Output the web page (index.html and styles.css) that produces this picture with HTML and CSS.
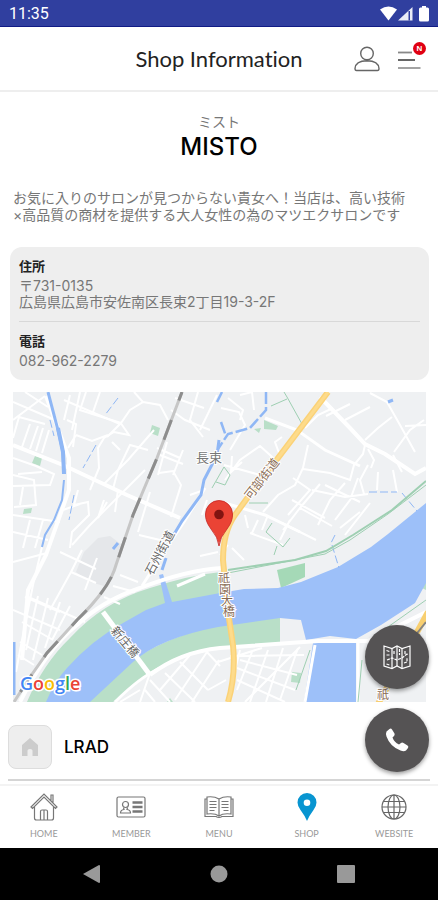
FILE: index.html
```html
<!DOCTYPE html>
<html lang="ja">
<head>
  <meta charset="UTF-8">
  <meta name="viewport" content="width=device-width, initial-scale=1.0">
  <title>Shop Information</title>
  <link rel="stylesheet" href="styles.css">
</head>
<body>
<div class="status-bar">
  <span class="clock">11:35</span>
  <svg class="status-icons" width="50" height="16" viewBox="0 0 50 16" fill="#fff">
    <path d="M0 3.600Q8.500-2.600 17 3.600L8.500 14.500z"/>
    <path d="M32.500 1v13.500H18z" opacity=".9"/>
    <path d="M28.500 5v9.500h1.500V5z" fill="#303f9f"/>
    <path d="M42 1.500v-1.500h4v1.500h1.500q1.500 0 1.500 1.500v11q0 1.500-1.500 1.500h-7q-1.500 0-1.500-1.500v-11q0-1.500 1.500-1.500z"/>
  </svg>
</div>

<header class="header">
  <h1>Shop Information</h1>
  <div class="header-actions">
    <button type="button" class="icon-btn" aria-label="Account">
      <svg width="26" height="26" viewBox="0 0 26 26" fill="none" stroke="#666" stroke-width="1.400">
        <circle cx="13" cy="7.500" r="6.300"/>
        <path d="M1 22.500Q1.500 15 13 14.800Q24.500 15 25 22.500q0 2-1.500 2h-21q-1.500 0-1.500-2z"/>
      </svg>
    </button>
    <button type="button" class="icon-btn menu-btn" aria-label="Menu">
      <svg width="23" height="26" viewBox="0 0 23 26" fill="none" stroke-width="1.800">
        <path d="M0 6.500h14" stroke="#888"/>
        <path d="M0 14h17" stroke="#555"/>
        <path d="M0 22h22.500" stroke="#999"/>
      </svg>
      <span class="badge">N</span>
    </button>
  </div>
</header>

<main>
  <section class="shop-title">
    <p>ミスト</p>
    <h2>MISTO</h2>
  </section>

  <p class="lead">お気に入りのサロンが見つからない貴女へ！当店は、高い技術<br>×高品質の商材を提供する大人女性の為のマツエクサロンです</p>

  <dl class="info-card">
    <div class="info-row">
      <dt>住所</dt>
      <dd>〒731-0135<br>広島県広島市安佐南区長束2丁目19-3-2F</dd>
    </div>
    <div class="info-row">
      <dt>電話</dt>
      <dd>082-962-2279</dd>
    </div>
  </dl>

  <div class="map">
    <svg viewBox="13 392 413 310" role="img" aria-label="地図">
      <rect x="13" y="392" width="413" height="310" fill="#eff1f3"/>
      <path d="M110 536L122 545 116 565 104 586 90 582 76 572 84 552 98 538z" fill="#e5e7ea"/>

      <!-- parks and river banks -->
      <g fill="#b9dfc8">
        <path d="M27 702Q43 664 70 638Q103 602 150 588Q190 575 221 572V600L165 612 100 650 50 702z"/>
        <path d="M88 702Q110 674 133 660Q170 635 218 626L280 616V643L220 647Q180 652 150 673L113 702z"/>
        <path d="M277 570L305 563V577L281 588z" fill="#a5d9b7"/>
        <path d="M152 425l8 3-2 8-8-3z"/>
        <path d="M35 456l7 2-2 8-8-3z"/>
        <path d="M24 509l8-1-1 5-8 1z"/>
        <path d="M264 420l14 6-2 4-12-1zM254 429l7-1-2 5z"/>
        <path d="M292 672l9 1-1 10-9-1z"/>
        <path d="M426 580v10l-4-2z"/>
        <path d="M170 698l3 4h-6z"/>
      </g>

      <!-- river -->
      <g fill="#9dc0f9">
        <path d="M46 702Q54 682 67 668Q92 640 123 623L146 610 165 603 159 575l4-1 9 28 48-9 24-4 34-1 23-6 37-15 33-20 17-13 38-31V583l-11 20-34 22-25 14-26-3-24 4-5-20-21-2-62 9Q160 638 133 662L90 702z"/>
        <path d="M313 643H356V702H304z"/>
      </g>

      <!-- small streets -->
      <g fill="none" stroke="#fff" stroke-width="2">
        <path d="M13 402L34 411 55 420M13 420L45 396M25 392L48 407M70 395L64 420M80 392L72 430M64 400L120 424 107 437"/>
        <path d="M13 438L19 417 45 424M22 447L30 424M30 449L38 426M36 451L43 428M42 453L49 430M67 420L76 424 73 447M76 435L92 441 108 435M76 435L68 448"/>
        <path d="M86 392L80 410 121 423 130 410 143 402 134 392M100 392L92 415M143 402L160 405 168 420M120 422L129 435 114 432 104 438 98 448 99 468 90 490M112 442L120 450M148 450L130 445 118 470 113 489M104 484L128 460 154 430"/>
        <path d="M13 458L36 466 54 474 50 485 13 486M18 474L42 472M13 475L34 480 36 505 14 507M13 515L60 522M23 487L20 505M13 532L48 540M30 520L23 548M43 520L35 548M78 490L74 505 88 502 89 515 72 532 70 548M63 510L80 504M104 500L98 518 107 502M118 490L115 512"/>
        <path d="M157 448L180 458M160 455L183 464M167 442L158 475M159 473L173 471 181 485 171 517M150 492L138 532M183 450L173 475M139 535L160 540M171 410L185 420 210 430M175 398L204 408M198 392L190 420 203 437M217 395L200 430M228 398L243 410 240 420M190 495L204 490M207 500L202 515"/>
        <path d="M42 547L33 585 22 640 16 672M13 562L47 553M25 597L60 612M60 552L96 569M82 550L71 572 50 610M71 572L96 583M97 558L85 590M13 610L60 630M26 596L85 622M22 622L53 640M20 642L42 655M18 655L34 665M60 602L45 648M48 598L33 660M38 596L26 650M70 606L52 640M113 586L135 592M120 575L138 582M104 597L120 604"/>
        <path d="M240 395L252 392 254 410M221 408L239 412 245 425 230 450M224 465L260 475M232 456L231 472 242 462M225 480L240 460 260 446 270 455 278 463M282 437L275 442 279 453M305 428L318 415 333 408M308 445L303 468 295 485 278 495 263 512M303 469L330 473 350 480 354 465 363 454 365 445M368 449L374 460 371 468M293 478L310 490 288 515M320 484L300 508 283 530M312 490L345 497 368 494M325 485L360 502M300 508L332 526M292 500L325 518M345 483L330 500 318 525M358 478L350 500 335 520M393 470L397 492M378 472L377 490M364 494L360 480 368 465M393 455L402 472M360 512L340 528M370 503L345 535M282 523L316 540M245 515L248 528M258 520L252 533M268 515L262 530M250 533L283 545M290 520L280 540"/>
        <path d="M350 404L326 416M370 407L345 420M365 440L378 428 392 417M370 393L387 402 400 425 415 452M424 420L410 430 394 452M426 425L405 426M220 555L228 545M232 548L244 560M200 556L218 552"/>
        <path d="M230 656L304 655M218 662L262 648M240 650L235 670M252 652L237 690M268 650L250 702M283 648L266 702M298 648L280 700M237 668L295 690M237 680L285 702M240 660L297 675M150 680L170 702M165 673L195 702M180 662L208 690M205 650L220 666M190 655L160 690M207 652L175 700M219 660L192 702M150 673L140 702M208 690L226 680M145 690L155 702M120 702L140 690"/>
      </g>

      <!-- wide roads -->
      <g fill="none" stroke="#fff" stroke-width="4">
        <path d="M13 445L63 465 127 495 180 518"/>
        <path d="M46 396L69 458 69 490 46 555 28 590 22 660"/>
        <path d="M20 702Q46 650 77 625Q102 601 140 588Q187 570 222 568"/>
        <path d="M103 612L150 675" stroke-width="5"/>
        <path d="M150 675Q180 652 220 648L318 641 368 641 426 612"/>
        <path d="M320 397L350 428 365 444 385 454 415 474 426 468"/>
        <path d="M265 418L297 430 325 450 360 466" stroke-width="3"/>
        <path d="M218 501L265 515 300 532" stroke-width="3"/>
        <path d="M115 702Q140 677 160 668" stroke-width="3"/>
        <path d="M205 488L184 522 165 550 142 586" stroke-width="3"/>
        <path d="M145 470L90 525 72 545" stroke-width="2"/>
        <path d="M358 642V702M305 702L315 645" stroke-width="3"/>
        <path d="M177 586L205 574" stroke-width="3"/>
        <path d="M245 702L300 647" stroke-width="2"/>
      </g>

      <!-- canals -->
      <g fill="none" stroke="#8fb7f5">
        <path d="M48 392L58 430 63 452 64 474" stroke-width="3"/>
        <path d="M58 428L63 452 64 474" stroke-width="4"/>
        <path d="M64 480L62 500 54 520 45 535 42 547" stroke-width="2"/>
        <path d="M219 440L217 455 204 480 201 495 182 521 173 536" stroke-width="3"/>
        <path d="M266 392L266 410 250 428 228 434 218 449M221 422L226 436M222 392L217 402" stroke-width="2.500" stroke-dasharray="12 3"/>
        <path d="M14 642V695M118 543L113 549M388 402L393 400" stroke-width="3"/>
        <path d="M162 570L166 558" stroke-width="3"/>
        <path d="M118 398L105 415M96 445L83 468M74 495L69 520M50 420L54 436M369 492L397 492M402 493L417 511M332 545L339 568M335 535L330 545" stroke-width="1" stroke-dasharray="8 3"/>
      </g>

      <!-- footpaths -->
      <g fill="none" stroke="#9ecfb2">
        <path d="M426 481L392 510 353 535 326 551 295 560 228 570" stroke-width="2"/>
        <path d="M426 485L388 514 350 540 325 554 228 573M284 392L287 397 302 424M271 406L287 399M249 503L268 503M272 523L266 532 283 547 290 538M277 546L274 555M358 702L362 660M296 690L310 650M378 634L426 600M212 488L224 467 230 475 225 485 216 482" stroke-width="1"/>
      </g>

      <!-- railway -->
      <path d="M182 392L157 458 133 515 116 565Q110 588 77 620L47 653 28 680 14 702" fill="none" stroke="#c6c6c6" stroke-width="3"/>
      <path d="M182 392L157 458 133 515 116 565Q110 588 77 620L47 653 28 680 14 702" fill="none" stroke="#8d8d8d" stroke-width="3" stroke-dasharray="21 21" stroke-dashoffset="12"/>

      <!-- main road -->
      <path d="M328 392L278 458 248 497 235 515Q223 532 223 560L228 612 233 645Q236 675 228 702" fill="none" stroke="#fbd277" stroke-width="6"/>
      <path d="M328 392L278 458 248 497 235 515Q223 532 223 560L228 612 233 645Q236 675 228 702" fill="none" stroke="#fddb8b" stroke-width="3"/>
      <path d="M428 612L378 704" fill="none" stroke="#f8cf70" stroke-width="6"/>
      <path d="M426 622L410 642" fill="none" stroke="#858585" stroke-width="2"/>

      <g class="map-labels">
        <text x="196" y="462" class="area">長束</text>
        <text transform="translate(262 479) rotate(-52)" class="road" y="4">可部街道</text>
        <text transform="translate(160 553) rotate(-62)" y="4">石州街道</text>
        <text transform="translate(125 642) rotate(50)" y="4">新庄橋</text>
        <text class="road" x="224 225 227 229" y="583 594 605 616">祇園大橋</text>
        <text class="road" x="383" y="699">祇</text>
      </g>

      <text class="google" x="20" y="690"><tspan fill="#4285f4">G</tspan><tspan fill="#ea4335">o</tspan><tspan fill="#fbbc05">o</tspan><tspan fill="#4285f4">g</tspan><tspan fill="#34a853">l</tspan><tspan fill="#ea4335">e</tspan></text>

      <path d="M219 546Q218 537 211 529Q205 521 205.500 514A13.500 13.500 0 0 1 232.500 514Q233 521 227 529Q220 537 219 546z" fill="#ea4335" stroke="#c5221f" stroke-width=".8"/>
      <circle cx="219" cy="514.500" r="4.800" fill="#811411"/>
    </svg>
  </div>

  <a href="#" class="shop-link">
    <span class="shop-thumb">
      <svg width="16" height="18" viewBox="0 0 16 18" fill="#ccc"><path d="M8 0l8 7v11h-5.500v-5.500q0-1.500-2.500-1.500t-2.500 1.500V18H0V7z"/></svg>
    </span>
    <span>LRAD</span>
  </a>
</main>

<div class="fabs">
  <button type="button" class="fab" aria-label="地図を開く">
    <svg width="28" height="26" viewBox="0 0 28 26" fill="none" stroke="#fff" stroke-width="1.200">
      <path d="M1 2L9 4.500 14 2l5 2.500 8-2.500v20l-8 2.500-5-2.500-5 2.500-8-2.500z"/>
      <path d="M9 4.500v20M14 2v20M19 4.500v20"/>
      <path d="M3.500 6.500l3 1M3.500 11h3.500M3.500 20l3 1M4 16l5-2 5 2 5-2 5-4M16.500 5v6M22 7v4l3-1M21 19l3-1v-4M11 7v4" stroke-dasharray="3 1"/>
    </svg>
  </button>
  <button type="button" class="fab" aria-label="電話をかける">
    <svg width="24" height="24" viewBox="0 0 24 24" fill="#fff"><path d="M1.500 3.500L4.500 1Q6 0 7 1.500L9.500 5.500Q10 7 9 8L7.500 9.500Q9 14 14 16.500L16 15Q17 14.200 18.500 15L22.500 17.500Q24 18.500 23 20L21 22.500Q19 24 15.500 22.500Q5 18.500 1.500 8.500Q.5 5.500 1.500 3.500z"/></svg>
  </button>
</div>

<nav class="tabs">
  <a href="#">
    <svg width="28" height="28" viewBox="0 0 28 28" fill="none" stroke="#777" stroke-width="1.200">
      <path d="M1 14L14 1l13 13-1.500 1.500L14 4 2.500 15.500zM4.500 14v11q0 2 2 2h15q2 0 2-2V14M21 7.500V2h2v7.500M10.500 27V18.500q0-1.500 1.500-1.500h4q1.500 0 1.500 1.500V27M14 17v10"/>
    </svg>
    <span>HOME</span>
  </a>
  <a href="#">
    <svg width="30" height="28" viewBox="0 0 30 28" fill="none" stroke="#777" stroke-width="1.200">
      <rect x="1" y="4" width="28" height="20" rx="1.500"/>
      <circle cx="9.500" cy="11.500" r="3"/>
      <path d="M7.500 14.500l.5 2Q4.500 17 4.500 20h10q0-3-3.500-3.500l.5-2"/>
      <path d="M16.500 9.500h10M16.500 14h10M16.500 18.500h10" stroke-width="2.500"/>
    </svg>
    <span>MEMBER</span>
  </a>
  <a href="#">
    <svg width="30" height="28" viewBox="0 0 30 28" fill="none" stroke="#777" stroke-width="1.200">
      <path d="M15 6Q10 3 3 4v17q8-1 12 2 4-3 12-2V4Q20 3 15 6zM15 6v17M3 6H1v17.500h11q3 2 6 0h11V6h-2"/>
      <path d="M5.500 8.500h7M5.500 11.500h7M5.500 14.500h7M5.500 17.500h5M17.500 8.500h7M17.500 11.500h7M17.500 14.500h7M19.500 17.500h5"/>
    </svg>
    <span>MENU</span>
  </a>
  <a href="#" class="active">
    <svg width="20" height="28" viewBox="0 0 20 28" fill="#0895d1"><path fill-rule="evenodd" d="M10 28Q8 23 3.500 17Q.5 13 .5 9.500a9.500 9.500 0 0 1 19 0Q19.500 13 16.500 17Q12 23 10 28zM10 6.500a3.300 3.300 0 1 0 0 6.600a3.300 3.300 0 1 0 0-6.600z"/></svg>
    <span>SHOP</span>
  </a>
  <a href="#">
    <svg width="26" height="28" viewBox="0 0 26 28" fill="none" stroke="#666" stroke-width="1.200">
      <circle cx="13" cy="14" r="12"/>
      <ellipse cx="13" cy="14" rx="6" ry="12"/>
      <path d="M13 2v24M1 14h24M3 8.500h20M3 19.500h20"/>
    </svg>
    <span>WEBSITE</span>
  </a>
</nav>

<div class="system-bar">
  <button type="button" aria-label="Back"><svg width="18" height="20" viewBox="0 0 18 20" fill="#999"><path d="M0 10L16 1q1 0 1 1v16q0 1-1 1z"/></svg></button>
  <button type="button" aria-label="Home"><svg width="18" height="18" viewBox="0 0 18 18" fill="#999"><circle cx="9" cy="9" r="8.500"/></svg></button>
  <button type="button" aria-label="Recent apps"><svg width="18" height="18" viewBox="0 0 18 18" fill="#999"><rect width="18" height="18" rx="1"/></svg></button>
</div>
</body>
</html>
```

FILE: styles.css
```css
* { margin: 0; padding: 0; box-sizing: border-box; }
body {
  min-height: 100vh; display: flex; flex-direction: column;
  font-family: Inter, "Noto Sans CJK JP", sans-serif;
  background: #fff; color: #000;
}
svg { display: block; }
button { background: none; border: none; cursor: pointer; }
a { color: inherit; text-decoration: none; }

.status-bar {
  display: flex; align-items: center; justify-content: space-between;
  height: 27px; padding: 1px 8px 0 9px;
  background: #303f9f; border-bottom: 1px solid #101b85; color: #fff;
}
.clock { font: 400 16px Roboto, sans-serif; }

.header {
  display: grid; grid-template-columns: 1fr auto 1fr; align-items: center;
  height: 65px; padding: 0 17px;
  border-bottom: 2px solid #eee;
}
.header h1 {
  grid-column: 2;
  font: 400 22px Lato, sans-serif; color: #222;
  font-variant-ligatures: none;
}
.header-actions { display: flex; gap: 18px; justify-content: flex-end; }
.icon-btn { position: relative; }
.badge {
  position: absolute; top: -4px; right: -5px;
  width: 13px; height: 13px; border-radius: 50%;
  background: #e00012; color: #fff;
  font-size: 8px; font-weight: 700; line-height: 13px; text-align: center;
}

main { flex: 1; padding: 0 8px; }
.shop-title { padding-top: 20px; text-align: center; }
.shop-title p { font-size: 14px; line-height: 20px; color: #777; }
.shop-title h2 { font-size: 24px; font-weight: 500; line-height: 30px; }
.lead {
  margin-top: 27px; padding-left: 5px;
  font-size: 14px; line-height: 17px; color: #777; white-space: nowrap;
}

.info-card {
  margin: 24px 1px 0 2px; padding: 0 9px;
  background: #eee; border-radius: 12px;
}
.info-row { padding: 10px 0 11px; }
.info-row + .info-row { border-top: 1px solid #d8d8d8; }
.info-row dt { font-size: 13px; font-weight: 700; line-height: 18px; color: #222; }
.info-row dd { padding-top: 3px; font-size: 14px; line-height: 16px; color: #777; }

.map { margin: 12px 4px 0 5px; }
.map svg { width: 100%; height: auto; }
.map-labels text {
  font-size: 12px; fill: #666; text-anchor: middle;
  stroke: #fff; stroke-width: 2px; paint-order: stroke;
}
.map-labels .area { font-size: 13px; fill: #777; text-anchor: start; }
.map-labels .road { fill: #8a6c55; }
.google {
  font: 600 18px "Open Sans", sans-serif;
  stroke: #fff; stroke-width: 3px; paint-order: stroke;
}

.shop-link {
  display: flex; align-items: center; gap: 12px;
  margin-top: 23px; padding-bottom: 10px;
  border-bottom: 2px solid #d5d5d5;
  font-size: 17px; font-weight: 500;
}
.shop-thumb {
  display: flex; align-items: center; justify-content: center;
  width: 44px; height: 44px;
  background: #eee; border: 1px solid #ddd; border-radius: 8px;
}

.fabs {
  position: fixed; right: 9px; bottom: 128px;
  display: flex; flex-direction: column; gap: 19px;
}
.fab {
  display: flex; align-items: center; justify-content: center;
  width: 64px; height: 64px; border-radius: 50%;
  background: #555354; box-shadow: 0 2px 4px rgba(0, 0, 0, 0.4);
}

.tabs {
  display: grid; grid-template-columns: repeat(5, 1fr);
  height: 64px; padding-top: 7px;
  border-top: 2px solid #f3f3f3;
}
.tabs a {
  display: flex; flex-direction: column; align-items: center; gap: 7px;
  font: 400 9px/12px Lato, sans-serif; color: #999;
}

.system-bar {
  display: flex; align-items: center; justify-content: space-around;
  height: 52px; padding: 0 29px; background: #000;
}
```
